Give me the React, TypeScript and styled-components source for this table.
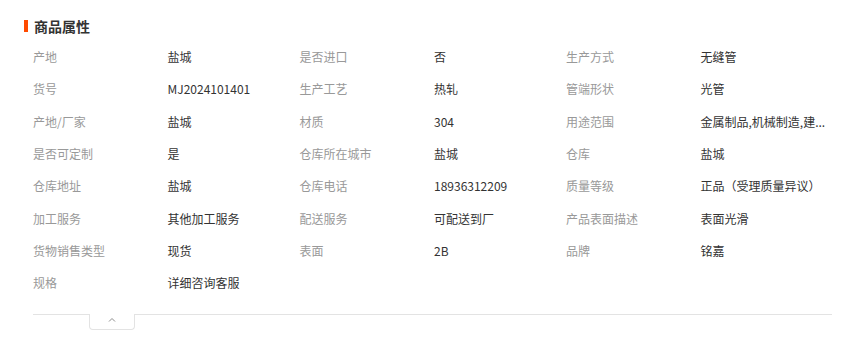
import React from "react";
import styled, { createGlobalStyle } from "styled-components";

const attrs: [string, string][] = [
  ["产地", "盐城"],
  ["是否进口", "否"],
  ["生产方式", "无缝管"],
  ["货号", "MJ2024101401"],
  ["生产工艺", "热轧"],
  ["管端形状", "光管"],
  ["产地/厂家", "盐城"],
  ["材质", "304"],
  ["用途范围", "金属制品,机械制造,建..."],
  ["是否可定制", "是"],
  ["仓库所在城市", "盐城"],
  ["仓库", "盐城"],
  ["仓库地址", "盐城"],
  ["仓库电话", "18936312209"],
  ["质量等级", "正品（受理质量异议）"],
  ["加工服务", "其他加工服务"],
  ["配送服务", "可配送到厂"],
  ["产品表面描述", "表面光滑"],
  ["货物销售类型", "现货"],
  ["表面", "2B"],
  ["品牌", "铭嘉"],
  ["规格", "详细咨询客服"],
];

const GlobalStyle = createGlobalStyle`
  body {
    margin: 0;
    background: #fff;
    font-family: "Noto Sans CJK SC", "Liberation Sans", sans-serif;
  }
`;

const Section = styled.section`
  width: 848px;
  box-sizing: border-box;
  padding: 16px 16px 0 24px;
`;

const Title = styled.h3`
  margin: 0;
  display: flex;
  align-items: center;
  gap: 6px;
  height: 20px;
  font-size: 14px;
  font-weight: 700;
  color: #333;

  &::before {
    content: "";
    width: 4px;
    height: 12px;
    background: #ff4a00;
  }
`;

const Body = styled.div`
  padding-left: 9px;
`;

const Grid = styled.dl`
  margin: 5px 0 0;
  display: grid;
  grid-template-columns: repeat(3, 134.5px 132px);
  grid-auto-rows: 32.3px;
  align-items: center;
  font-size: 12px;
  line-height: 18px;
`;

const Label = styled.dt`
  margin: 0;
  color: #999;
  white-space: nowrap;
`;

const Value = styled.dd`
  margin: 0;
  color: #333;
  white-space: nowrap;
`;

const Footer = styled.div`
  margin-top: 15px;
  height: 30px;
  border-top: 1px solid #e3e3e3;
`;

const Toggle = styled.button`
  display: flex;
  align-items: flex-start;
  justify-content: center;
  margin: -1px 0 0 56px;
  padding: 3px 0 0;
  width: 46px;
  height: 16px;
  box-sizing: border-box;
  background: #fff;
  border: 1px solid #e3e3e3;
  border-top: none;
  border-radius: 0 0 4px 4px;
  color: #8c8c8c;
  cursor: pointer;
`;

const Caret = () => (
  <svg width="8" height="5" viewBox="0 0 8 5" fill="none">
    <polyline points="1,4.5 4,1.5 7,4.5" stroke="currentColor" strokeWidth="1" />
  </svg>
);

export default function App() {
  return (
    <>
      <GlobalStyle />
      <Section>
        <Title>商品属性</Title>
        <Body>
          <Grid>
            {attrs.map(([k, v]) => (
              <React.Fragment key={k}>
                <Label>{k}</Label>
                <Value>{v}</Value>
              </React.Fragment>
            ))}
          </Grid>
          <Footer>
            <Toggle aria-label="收起">
              <Caret />
            </Toggle>
          </Footer>
        </Body>
      </Section>
    </>
  );
}
